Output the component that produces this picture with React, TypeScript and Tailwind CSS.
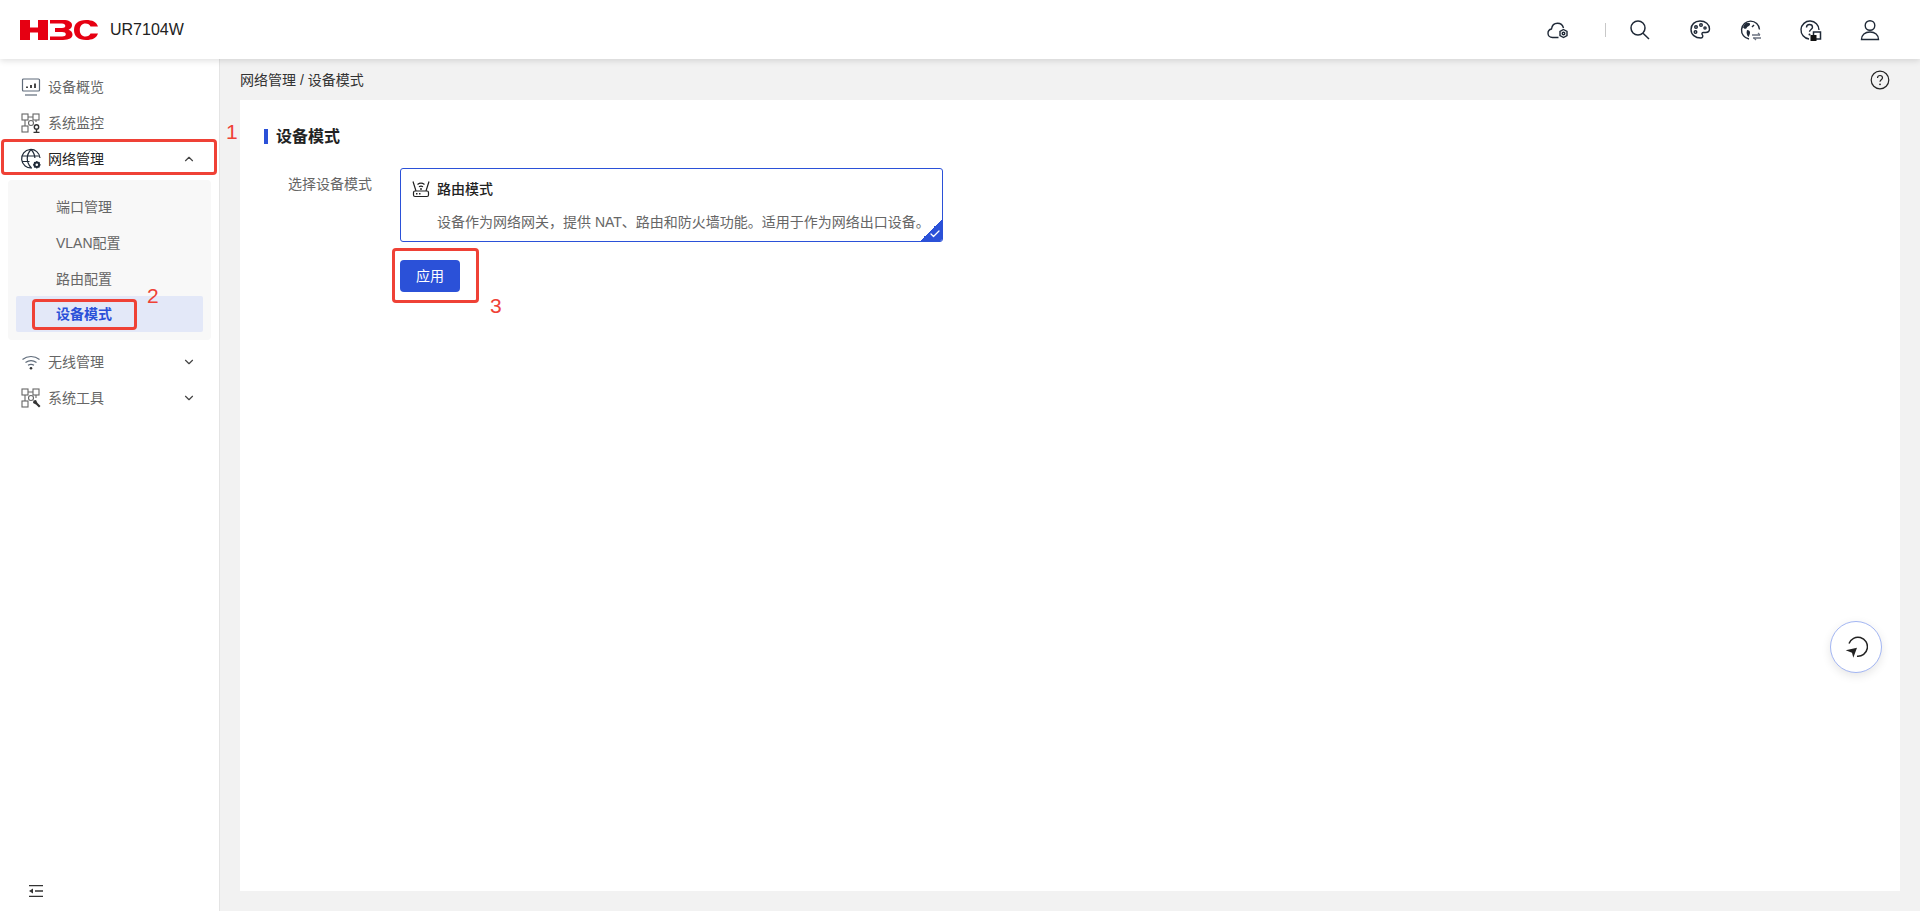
import React from 'react'
import { ChevronDown, ChevronUp, Check } from 'lucide-react'

const font = "font-['Liberation_Sans','Noto_Sans_CJK_SC',sans-serif]"

function Logo() {
  return (
    <svg width="78" height="20" viewBox="0 0 78 20" className="shrink-0">
      <g fill="#e60012">
        {/* H */}
        <path d="M0 0h10v7.500h8V0h10v20H18v-7.500h-8V20H0z" />
        {/* 3 */}
        <path d="M30 0h13c6 0 9 2 9 5.200 0 2.200-1.400 3.800-3.500 4.600 2.400.8 4 2.500 4 4.800 0 3.500-3.200 5.400-9.500 5.400H30v-3.600h12c2.500 0 3.800-.7 3.800-2.200s-1.300-2.300-3.800-2.300h-7V8h7c2.200 0 3.300-.7 3.300-2 0-1.400-1.100-2.400-3.300-2.400H30z" />
        {/* C */}
        <path d="M78 6.500h-7.500c-.8-2-2.500-3-5-3-3.500 0-5.700 2.500-5.700 6.500s2.200 6.500 5.700 6.500c2.500 0 4.200-1 5-3H78C76.500 18 72.500 20 66 20c-8 0-12-3.800-12-10S58 0 66 0c6.500 0 10.500 2 12 6.500z" />
      </g>
    </svg>
  )
}

const OverviewIcon = () => (
  <svg width="20" height="20" viewBox="0 0 20 20" fill="none" stroke="#5f6b7a" strokeWidth="1.200">
    <rect x="1.500" y="2" width="17" height="12" rx="1" />
    <path d="M4 18h12" />
    <path d="M6 11V9.500M10 11V8M14 11V6.500" strokeWidth="1.800" stroke="#333" />
  </svg>
)

const MonitorIcon = () => (
  <svg width="20" height="20" viewBox="0 0 20 20" fill="none" stroke="#666" strokeWidth="1.100">
    <rect x="1" y="1" width="6" height="6" />
    <rect x="12" y="1" width="6" height="6" />
    <rect x="1" y="13" width="6" height="6" />
    <circle cx="10" cy="10" r="2.500" />
    <path d="M7 4h5M4 7v6M15 7v2" />
    <circle cx="15.500" cy="14" r="2.200" stroke="#333" strokeWidth="1.400" />
    <path d="M12.500 19.500h6M15.500 16.500v3" stroke="#333" strokeWidth="1.400" />
  </svg>
)

const GlobeGearIcon = () => (
  <svg width="20" height="20" viewBox="0 0 20 20" fill="none" stroke="#1f2937" strokeWidth="1.200" className="overflow-visible">
    <path d="M11 18.800A9.200 9.200 0 1 1 19 9" />
    <path d="M10 .5c-5 5.500-5 12.500 0 18M10 .5c2.500 2.500 3.700 5 3.900 8.500M1.200 7h17M1.200 12.500h7.300" />
    <circle cx="15.800" cy="15.800" r="2.300" strokeWidth="2" />
    <path d="M15.800 12v1.300M15.800 18.300v1.300M12 15.800h1.300M18.300 15.800h1.300M13.200 13.200l.8.800M17.600 17.600l.8.800M13.200 18.400l.8-.8M17.600 14l.8-.8" strokeWidth="1.200" />
  </svg>
)

const WifiIcon = () => (
  <svg width="20" height="20" viewBox="0 0 20 20" fill="none" stroke="#5f6b7a" strokeWidth="1.200">
    <path d="M1.500 7.500c5-4 12-4 17 0M4.500 10.500c3.500-2.500 7.500-2.500 11 0M7 13.300c2-1.200 4-1.200 6 0" />
    <circle cx="10" cy="16.300" r="1.300" fill="#333" stroke="none" />
  </svg>
)

const ToolsIcon = () => (
  <svg width="20" height="20" viewBox="0 0 20 20" fill="none" stroke="#666" strokeWidth="1.100">
    <rect x="1" y="1" width="6" height="6" />
    <rect x="12" y="1" width="6" height="6" />
    <rect x="1" y="13" width="6" height="6" />
    <circle cx="10" cy="10" r="2.500" />
    <path d="M7 4h5M4 7v6M15 7v3" />
    <path d="M12.500 12.500l2.500-.5 1.500 3 3 3-1.500 1.500-3-3-3-1.500z" fill="#333" stroke="none" />
  </svg>
)

const CloudIcon = () => (
  <svg width="24" height="24" viewBox="0 0 24 24" fill="none" stroke="#1f2937" strokeWidth="1.400">
    <path d="M12.500 19.500H6.500C3.800 19.500 2 17.500 2 15.200c0-2.200 1.500-3.800 3.500-4.200C6 7.500 8.500 5.200 11.500 5.200c3 0 5.300 2 6 4.800" />
    <path d="M17.500 11.500l3.500 2v4l-3.500 2-3.500-2v-4z" />
    <circle cx="17.500" cy="15.500" r="1.300" />
  </svg>
)

const SearchIcon = () => (
  <svg width="24" height="24" viewBox="0 0 24 24" fill="none" stroke="#1f2937" strokeWidth="1.500">
    <circle cx="10" cy="10" r="7" />
    <path d="M15 15.300l6 5.700" />
  </svg>
)

const PaletteIcon = () => (
  <svg width="24" height="24" viewBox="0 0 24 24" fill="none" stroke="#1f2937" strokeWidth="1.400">
    <path d="M12 3c5.500 0 9.500 3.500 9.500 8 0 2.500-2 3.500-4 3.500h-2.200c-1.300 0-1.800 1.500-1 2.300.9 1 .6 3.200-1.300 3.200C7 20 3 16.500 3 11.500S6.800 3 12 3z" />
    <circle cx="8" cy="9" r="1.300" />
    <circle cx="13" cy="7" r="1.300" />
    <circle cx="17" cy="10" r="1.100" />
    <circle cx="7.500" cy="14" r="1.300" />
  </svg>
)

const GlobeSwapIcon = () => (
  <svg width="24" height="24" viewBox="0 0 24 24" fill="none" stroke="#1f2937" strokeWidth="1.400">
    <path d="M11 21a9 9 0 1 1 10.500-9.500" />
    <path d="M7 5.500c2-1 4-1 5 0 .5 1.500-1 2.500-2 3-1.500.5-1 2-2.500 2.300-1 .2-2-.5-2.500-1.500z" fill="#1f2937" stroke="none" />
    <path d="M9 12c2 0 3 1 3 2.500 0 1.500-.8 3-1.500 4.500-1.500-1.500-2.500-4-1.500-7z" fill="#1f2937" stroke="none" />
    <path d="M16 7l-2 2" />
    <path d="M14 17h8M15 20h8" stroke="#6b7280" strokeWidth="1.300" />
    <path d="M20 15l2 2M18 22l-2-2" stroke="#6b7280" strokeWidth="1.200" />
  </svg>
)

const HelpCopyIcon = () => (
  <svg width="24" height="24" viewBox="0 0 24 24" fill="none" stroke="#1f2937" strokeWidth="1.400">
    <path d="M11 21a9 9 0 1 1 10-9" />
    <path d="M8.500 9.500c0-2 1.500-3 3-3s3 1 3 2.700c0 2.200-3 2.300-3 4.600" />
    <circle cx="11.500" cy="16.500" r="1" fill="#1f2937" stroke="none" />
    <rect x="15.500" y="14" width="7" height="7" fill="#fff" strokeWidth="1.500" />
    <rect x="12.500" y="17" width="6" height="6" fill="#111" stroke="none" />
  </svg>
)

const UserIcon = () => (
  <svg width="24" height="24" viewBox="0 0 24 24" fill="none" stroke="#1f2937" strokeWidth="1.400">
    <circle cx="12" cy="7.500" r="4.800" />
    <path d="M3.500 21.500c0-4.500 3.500-7.500 8.500-7.500s8.500 3 8.500 7.500z" />
  </svg>
)

const RouterIcon = () => (
  <svg width="18" height="18" viewBox="0 0 18 18" fill="none" stroke="#222" strokeWidth="1.200">
    <rect x="1.500" y="11" width="15" height="5.500" rx="1.500" />
    <path d="M1 1.500l3 9.500M17 1.500L14 11" />
    <path d="M5.500 4.500c2-1.500 5-1.500 7 0M7 6.800c1.200-.8 2.800-.8 4 0" />
    <circle cx="9" cy="9" r=".9" fill="#222" stroke="none" />
    <path d="M4 13.800h1.500M7 13.800h1.500" strokeWidth="1.400" />
  </svg>
)

const CollapseIcon = () => (
  <svg width="14" height="12" viewBox="0 0 14 12" fill="none" stroke="#333" strokeWidth="1.300">
    <path d="M0 .7h14M0 11.300h14M6 6h8" />
    <path d="M0 6l4-2.500v5z" fill="#333" stroke="none" />
  </svg>
)

const ResetIcon = () => (
  <svg width="24" height="24" viewBox="0 0 24 24" fill="none" stroke="#222" strokeWidth="1.500">
    <path d="M5 8.500A9.500 9.500 0 1 1 13 21.200" />
    <path d="M1.700 15.300L13 12.700 9.300 22.700 8 17.700z" fill="#222" stroke="none" />
  </svg>
)

function MenuRow({ icon, label, active, chevron }: { icon: React.ReactNode; label: string; active?: boolean; chevron?: 'up' | 'down' }) {
  return (
    <div className={`flex h-9 items-center pl-[21px] pr-[23px] text-[14px] ${active ? 'text-[#222]' : 'text-[#666]'}`}>
      <span className="flex w-[27px] shrink-0">{icon}</span>
      <span>{label}</span>
      {chevron === 'up' && <ChevronUp className="ml-auto" size={14} color="#444" />}
      {chevron === 'down' && <ChevronDown className="ml-auto" size={14} color="#444" />}
    </div>
  )
}

function SubRow({ label, active }: { label: string; active?: boolean }) {
  return (
    <div className={`flex h-9 items-center rounded-[2px] pl-[40px] text-[14px] ${active ? 'bg-[#e3e8f8] font-bold text-[#2b51d8]' : 'pt-[2px] text-[#666]'}`}>
      {label}
    </div>
  )
}

export default function App() {
  return (
    <div className={`relative flex h-[911px] w-[1920px] flex-col overflow-hidden bg-[#f2f2f2] ${font}`}>
      {/* Top bar */}
      <header className="z-10 flex h-[59px] shrink-0 items-center bg-white pl-[20px] pr-[38px] shadow-[0_2px_6px_rgba(0,0,0,0.12)]">
        <Logo />
        <span className="ml-[12px] pt-[1px] text-[16px] text-[#222]">UR7104W</span>
        <div className="ml-auto flex items-center">
          <CloudIcon />
          <span className="ml-[35px] h-[14px] w-px bg-[#c8c8c8]" />
          <span className="ml-[22px] flex"><SearchIcon /></span>
          <span className="ml-[36px] flex"><PaletteIcon /></span>
          <span className="ml-[26px] flex"><GlobeSwapIcon /></span>
          <span className="ml-[36px] flex"><HelpCopyIcon /></span>
          <span className="ml-[36px] flex"><UserIcon /></span>
        </div>
      </header>

      <div className="flex min-h-0 flex-1">
        {/* Sidebar */}
        <aside className="flex w-[220px] shrink-0 flex-col border-r border-[#e4e4e4] bg-white pt-[10px]">
          <MenuRow icon={<OverviewIcon />} label="设备概览" />
          <MenuRow icon={<MonitorIcon />} label="系统监控" />
          <MenuRow icon={<GlobeGearIcon />} label="网络管理" active chevron="up" />
          <div className="mx-[8px] mb-[4px] mt-[3px] rounded-[4px] bg-[#f8f8f8] p-[8px]">
            <SubRow label="端口管理" />
            <SubRow label="VLAN配置" />
            <SubRow label="路由配置" />
            <SubRow label="设备模式" active />
          </div>
          <MenuRow icon={<WifiIcon />} label="无线管理" chevron="down" />
          <MenuRow icon={<ToolsIcon />} label="系统工具" chevron="down" />
          <div className="mt-auto flex pb-[14px] pl-[29px]">
            <CollapseIcon />
          </div>
        </aside>

        {/* Main */}
        <main className="flex min-w-0 flex-1 flex-col px-[20px] pb-[20px]">
          <div className="flex h-[41px] shrink-0 items-center justify-between text-[14px] text-[#333]">
            <span className="pt-[1px]">网络管理 / 设备模式</span>
            <svg width="20" height="20" viewBox="0 0 20 20" fill="none" stroke="#222" strokeWidth="1.200" className="mr-[10px]">
              <circle cx="10" cy="10" r="8.800" />
              <path d="M7.500 8c0-1.500 1.100-2.500 2.500-2.500s2.500 1 2.500 2.300c0 1.900-2.500 2-2.500 4" />
              <circle cx="10" cy="14.300" r=".9" fill="#222" stroke="none" />
            </svg>
          </div>
          <section className="flex-1 bg-white pl-[24px] pt-[28px]">
            <h1 className="flex h-4 items-center text-[16px] font-bold leading-none text-[#222]">
              <span className="mr-[8px] h-[15px] w-[4px] bg-[#2b51d8]" />
              <span className="pt-[2px]">设备模式</span>
            </h1>
            <div className="mt-[24px] flex">
              <label className="w-[136px] pl-[24px] pt-[6px] text-[14px] text-[#666]">选择设备模式</label>
              <div>
                <div className="relative h-[74px] w-[543px] overflow-hidden rounded-[3px] border border-[#2b51d8] pl-[11px] pt-[11px]">
                  <div className="flex h-[18px] items-center gap-[7px] text-[14px] font-medium text-[#222]">
                    <RouterIcon />
                    路由模式
                  </div>
                  <p className="mt-[14px] h-5 pl-[25px] text-[14px] leading-5 text-[#666]">
                    设备作为网络网关，提供 NAT、路由和防火墙功能。适用于作为网络出口设备。
                  </p>
                  <span className="absolute bottom-0 right-0 h-[22px] w-[22px] bg-[linear-gradient(135deg,transparent_50%,#2b51d8_50%)]" />
                  <Check className="absolute bottom-[1px] right-[1px]" size={12} color="#fff" strokeWidth={2.500} />
                </div>
                <button className="mt-[18px] h-[32px] w-[60px] rounded-[4px] bg-[#2b51d8] text-[14px] text-white">应用</button>
              </div>
            </div>
          </section>
        </main>
      </div>

      {/* Floating button */}
      <div className="absolute left-[1830px] top-[621px] flex h-[52px] w-[52px] items-center justify-center rounded-full border border-[#a3b6f3] bg-white shadow-[0_3px_10px_rgba(0,0,0,0.1)]">
        <ResetIcon />
      </div>

      {/* Red annotations */}
      <div className="absolute left-[1px] top-[139px] h-[36px] w-[216px] rounded-[4px] border-[3px] border-[#ef4136]" />
      <div className="absolute left-[32px] top-[299px] h-[31px] w-[105px] rounded-[4px] border-[3px] border-[#ef4136]" />
      <div className="absolute left-[392px] top-[248px] h-[55px] w-[87px] rounded-[4px] border-[3px] border-[#ef4136]" />
      <span className="absolute left-[226px] top-[116px] text-[21px] text-[#ef4136]">1</span>
      <span className="absolute left-[147px] top-[280px] text-[21px] text-[#ef4136]">2</span>
      <span className="absolute left-[490px] top-[290px] text-[21px] text-[#ef4136]">3</span>
    </div>
  )
}
